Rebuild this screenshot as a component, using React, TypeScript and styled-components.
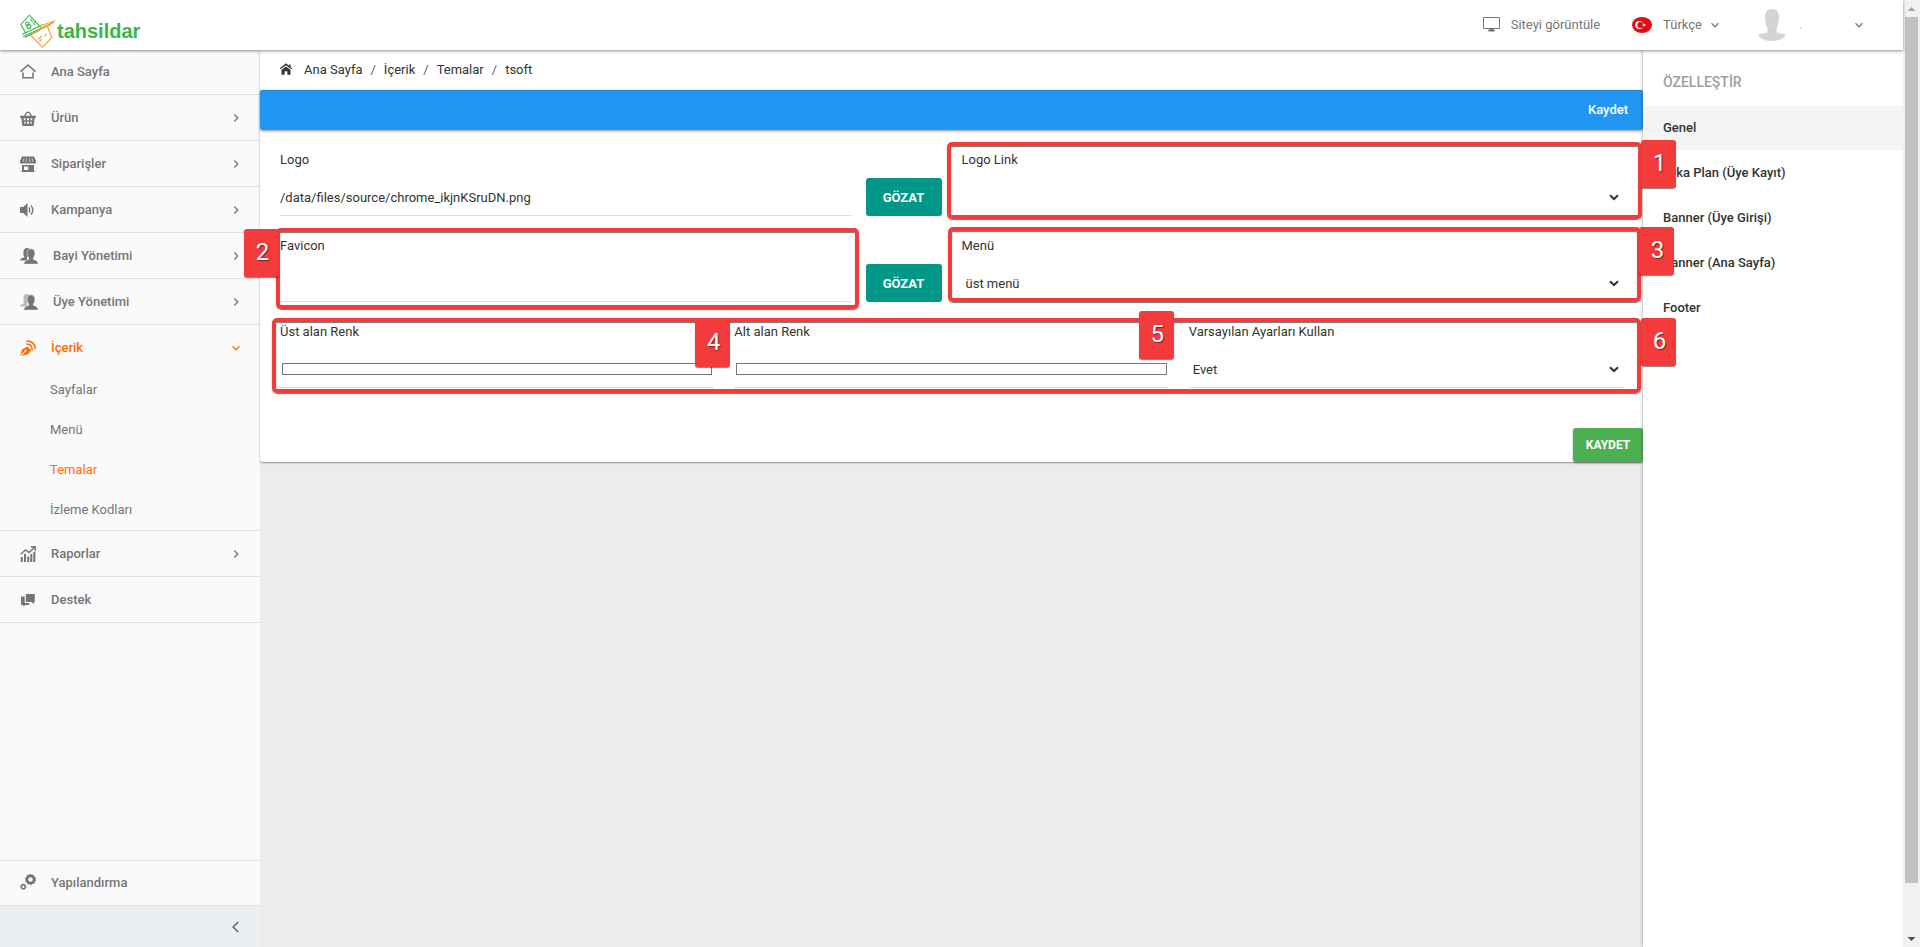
import React from "react";
import styled, { createGlobalStyle, css } from "styled-components";

const GlobalStyle = createGlobalStyle`
  *, *::before, *::after { box-sizing: border-box; }
  body { margin: 0; font-family: Roboto, "Liberation Sans", sans-serif; font-size: 13px; color: #333; background: #ececec; }
  button, input, select { font: inherit; color: inherit; }
  a { color: inherit; text-decoration: none; }
  ul, ol { list-style: none; margin: 0; padding: 0; }
`;

/* ---------- page frame ---------- */
const Page = styled.div`
  display: flex;
  min-height: 100vh;
`;

const Shell = styled.div`
  flex: 1;
  min-width: 0;
  display: flex;
  flex-direction: column;
`;

const Header = styled.header`
  position: relative;
  z-index: 3;
  height: 50px;
  padding: 0 39px 0 20px;
  display: flex;
  align-items: center;
  justify-content: space-between;
  background: #fff;
  color: #757575;
  box-shadow: 0 1px 3px rgba(0, 0, 0, 0.45);
`;

const Brand = styled.a`
  display: flex;
  align-items: center;
  gap: 1px;
  padding-top: 12px;
  color: #3bb54a;
  font: bold 20px/24px "Liberation Sans", Arial, sans-serif;
`;

const HeaderTools = styled.div`
  display: flex;
  align-items: center;
  padding-bottom: 1px;
`;

const ViewSite = styled.a`
  display: flex;
  align-items: center;
  gap: 11px;
  margin-right: 32px;
`;

const HeaderButton = styled.button`
  display: flex;
  align-items: center;
  gap: 8px;
  padding: 0;
  border: 0;
  background: none;
  & + & { margin-left: 38px; }
`;

const Language = styled.span`
  padding-left: 3px;
`;

const UserName = styled.span`
  width: 52px;
  padding-left: 5px;
  text-align: left;
  color: #bbb;
`;

const Body = styled.div`
  flex: 1;
  display: flex;
`;

/* ---------- left navigation ---------- */
const Sidebar = styled.nav`
  width: 260px;
  flex: none;
  display: flex;
  flex-direction: column;
  background: #fafafa;
  color: #757575;
  box-shadow: 0 0 3px rgba(0, 0, 0, 0.45);
`;

const NavList = styled.ul`
  flex: 1;
`;

const NavItem = styled.li`
  border-bottom: 1px solid #e3e3e3;
`;

const NavLink = styled.a<{ $active?: boolean; $short?: boolean }>`
  display: flex;
  align-items: center;
  height: ${(p) => (p.$short ? 44 : 45)}px;
  padding: 0 19px ${(p) => (p.$short ? 2 : 0)}px 20px;
  font-weight: 500;
  color: ${(p) => (p.$active ? "#ff6d00" : "inherit")};
`;

const NavLabel = styled.span`
  flex: 1;
  padding-left: 15px;
`;

const SubLink = styled.a<{ $active?: boolean }>`
  display: flex;
  align-items: center;
  height: 40px;
  padding: 0 0 2px 50px;
  color: ${(p) => (p.$active ? "#ff6d00" : "inherit")};
`;

const SidebarConfig = styled.div`
  border-top: 1px solid #e3e3e3;
  border-bottom: 1px solid #e3e3e3;
`;

const CollapseButton = styled.button`
  display: flex;
  align-items: center;
  justify-content: flex-end;
  height: 41px;
  padding: 0 18px;
  border: 0;
  background: #ebeff2;
  color: #616161;
`;

/* ---------- content ---------- */
const Main = styled.main`
  flex: 1;
  min-width: 0;
  background: #ececec;
`;

const Card = styled.section`
  background: #fff;
  border-radius: 0 0 3px 3px;
  box-shadow: 0 1px 2px rgba(0, 0, 0, 0.4);
`;

const Breadcrumb = styled.ol`
  display: flex;
  align-items: center;
  height: 40px;
  padding: 0 20px 2px;
`;

const Crumb = styled.li`
  display: flex;
  align-items: center;
  & + &::before { content: "/"; padding: 0 8px; color: #616161; }
`;

const HomeCrumb = styled.a`
  display: flex;
  align-items: center;
  gap: 12px;
`;

const ActionBar = styled.div`
  display: flex;
  align-items: center;
  justify-content: flex-end;
  height: 40px;
  padding: 0 15px 2px;
  border-radius: 3px;
  background: #2196f3;
  box-shadow: inset 0 1px 0 #1c86da, 0 1px 3px rgba(0, 0, 0, 0.45);
`;

const BarButton = styled.button`
  padding: 0;
  border: 0;
  background: none;
  color: #fff;
  font-weight: 500;
`;

const Form = styled.form`
  padding-top: 14px;
`;

const Rows = styled.div`
  display: flex;
  flex-direction: column;
  gap: 14px;
  padding: 0 20px;
`;

const Row = styled.div<{ $columns: number }>`
  position: relative;
  display: grid;
  grid-template-columns: repeat(${(p) => p.$columns}, minmax(0, 1fr));
  gap: 20px;
`;

const FieldGroup = styled.div`
  display: flex;
  align-items: flex-end;
  gap: 15px;
`;

const Field = styled.div`
  position: relative;
  flex: 1;
  min-width: 0;
  display: flex;
  flex-direction: column;
  gap: 2px;
`;

const Label = styled.label`
  line-height: 32px;
`;

const control = css`
  width: 100%;
  height: 38px;
  border: 0;
  border-bottom: 1px solid #dcdcdc;
  border-radius: 0;
  background: transparent;
  outline: none;
`;

const TextInput = styled.input`
  ${control}
  padding: 2px 0 0;
`;

const ColorInput = styled.input`
  ${control}
  appearance: none;
  padding: 13px 2px 12px;
  &::-webkit-color-swatch-wrapper { padding: 0; }
  &::-webkit-color-swatch { border: 1px solid #767676; border-radius: 0; }
`;

const SelectBox = styled.div`
  position: relative;
`;

const Select = styled.select`
  ${control}
  display: block;
  appearance: none;
  padding: 2px 30px 0 4px;
`;

const SelectArrow = styled.svg`
  position: absolute;
  right: 4px;
  top: 16px;
  pointer-events: none;
`;

const BrowseButton = styled.button`
  width: 76px;
  height: 38px;
  padding: 0;
  border: 0;
  border-radius: 3px;
  background: #009688;
  color: #fff;
  font-weight: 700;
`;

const FormFooter = styled.div`
  display: flex;
  justify-content: flex-end;
  padding-top: 40px;
`;

const SaveButton = styled.button`
  width: 70px;
  height: 34px;
  padding: 0;
  border: 0;
  border-radius: 3px;
  background: #4caf50;
  color: #fff;
  font-size: 12px;
  font-weight: 700;
  box-shadow: 0 1px 2px rgba(0, 0, 0, 0.35);
`;

/* ---------- numbered callouts lying over the form ---------- */
const Highlight = styled.div<{ $inset: string }>`
  position: absolute;
  z-index: 1;
  inset: ${(p) => p.$inset};
  border: 4px solid #f43b3b;
  border-radius: 5px;
  box-shadow: 0 1px 1px rgba(0, 0, 0, 0.55), inset 0 1px 1px rgba(0, 0, 0, 0.55);
  pointer-events: none;
`;

const Marker = styled.span<{ $top: number; $left?: number; $right?: number }>`
  position: absolute;
  z-index: 2;
  top: ${(p) => p.$top}px;
  left: ${(p) => (p.$left === undefined ? "auto" : `${p.$left}px`)};
  right: ${(p) => (p.$right === undefined ? "auto" : `${p.$right}px`)};
  width: 35px;
  height: 48px;
  padding-left: 2px;
  border-radius: 3px;
  background: #f43b3b;
  color: #fff;
  font-size: 24px;
  line-height: 47px;
  text-align: center;
  text-shadow: 1px 1px 1px rgba(0, 0, 0, 0.5);
  box-shadow: 0 1px 1px rgba(0, 0, 0, 0.5);
`;

/* ---------- right panel ---------- */
const Panel = styled.aside`
  width: 260px;
  flex: none;
  background: #fff;
  box-shadow: 0 0 3px rgba(0, 0, 0, 0.45);
`;

const PanelTitle = styled.h2`
  margin: 0;
  padding: 8px 20px 0;
  font-size: 14px;
  font-weight: 500;
  line-height: 48px;
  color: #9e9e9e;
`;

const PanelLink = styled.a<{ $active?: boolean }>`
  display: block;
  margin-bottom: 1px;
  padding: 0 20px;
  font-weight: 500;
  line-height: 44px;
  background: ${(p) => (p.$active ? "#f4f4f4" : "transparent")};
`;

/* ---------- scroll track ---------- */
const Track = styled.div`
  width: 17px;
  flex: none;
  display: flex;
  flex-direction: column;
  align-items: center;
  justify-content: space-between;
  background: #f1f1f1;
`;

const Thumb = styled.div`
  width: 13px;
  flex: 1;
  margin-bottom: 47px;
  background: #c1c1c1;
`;

const TrackArrow = styled.svg`
  display: block;
  flex: none;
`;

/* ---------- drawings ---------- */
const Chevron = ({ d, size = 10, width = 1.3 }: { d: string; size?: number; width?: number }) => (
  <svg width={size} height={size} viewBox="0 0 10 10" fill="none" stroke="currentColor" strokeWidth={width} aria-hidden="true">
    <path d={d} />
  </svg>
);
const RIGHT = "M3.3 1.5 6.8 5 3.3 8.5";
const DOWN = "M1.5 3.3 5 6.8 8.5 3.3";

const Icon = ({ children, width = 16 }: { children: React.ReactNode; width?: number }) => (
  <svg width={width} height="16" viewBox={`0 0 ${width} 16`} fill="currentColor" aria-hidden="true">
    {children}
  </svg>
);

const LogoMark = () => (
  <svg width="36" height="34" viewBox="0 0 36 34" fill="none" aria-hidden="true">
    <g stroke="#3bb54a" strokeWidth="1.1">
      <path d="M6 19.500 .8 10.500 9.300 1.200 21 13.500" />
      <path d="M3 22.700 33 8.700M2 20.500 23 10.500M5 23.500 20 16" />
      <circle cx="7.300" cy="9.700" r="1.700" />
      <circle cx="8.900" cy="12.600" r="2" />
      <path d="M10.500 5.300l2.400 2.700M13.500 9l1.500 2M14.200 7.500l1.200 1.500" />
    </g>
    <g stroke="#f8a13f" strokeWidth="1.200">
      <path d="M11 21.500 22.500 33.300 31.800 23.500 27.500 12.500" />
      <path d="M19 12.500 35 6.800M20 15 34 8.200M12 19.500 31 10.700" />
      <path d="M18 25.500l4-3.500M19.500 28l2-3M24.500 22.500l2-3" />
    </g>
  </svg>
);

const Home = () => (
  <Icon>
    <path d="M.5 8.600 8 2l7.500 6.600" fill="none" stroke="currentColor" strokeWidth="1.600" />
    <path d="M3 9.500v5.200h10V9.500" fill="none" stroke="currentColor" strokeWidth="1.600" />
  </Icon>
);
const Basket = () => (
  <Icon>
    <path d="M4.200 6.500 6.800 2.300h2.400l2.600 4.200" fill="none" stroke="currentColor" strokeWidth="1.300" />
    <path fillRule="evenodd" d="M0 5.800h16v2h-1.200L13.600 16H2.400L1.200 7.800H0zM3.600 8.200h1.900v2H3.900zM7 8.200h2v2H7zM10.500 8.200h1.900l-.3 2h-1.600zM4.100 11.700h1.500v2.100H4.400zM7 11.700h2v2.100H7zM10.400 11.700h1.500l-.3 2.100h-1.200z" />
  </Icon>
);
const Store = () => (
  <Icon>
    <path d="M2 .6h12L16 5v1.500a1.400 1.400 0 0 1-2.700.3 1.400 1.400 0 0 1-2.600 0 1.400 1.400 0 0 1-2.700 0 1.400 1.400 0 0 1-2.700 0 1.400 1.400 0 0 1-2.600 0A1.400 1.400 0 0 1 0 6.500V5z" />
    <path stroke="#fafafa" strokeWidth=".6" d="M4 2.500 3 6M6.600 2.500 6 6M9.400 2.500l.600 3.500M12 2.500 13 6" />
    <path fillRule="evenodd" d="M2 9h12v6h.8v1H1.200v-1H2zM4 10.600v3.400h4.200v-3.400z" />
  </Icon>
);
const Speaker = () => (
  <Icon>
    <path d="M0 5h3.200L7.500 1v14L3.200 11H0z" />
    <path d="M8.900 5.300q1.800 2.700 0 5.400M10.900 3.300q3.800 4.700 0 9.400" fill="none" stroke="currentColor" strokeWidth="1.300" />
  </Icon>
);
const Users = ({ faded }: { faded?: boolean }) => (
  <Icon width={18}>
    <path opacity={faded ? 0.5 : 1} d="M7 0c2.400 0 3.600 1.400 3.600 3.800L7 9.500V12.500H0c.2-1.800 2-2.500 4.500-3.300C3.300 7.700 3.200 5.500 3.600 3 4 1 5 0 7 0z" />
    <path stroke="#fafafa" strokeWidth=".5" d="M11 .8c2.700 0 3.900 1.700 3.900 4.600 0 2-.7 3.500-1.600 4.600v1.200c2 .8 4.600 1.200 4.900 5H3.800c.3-3.800 3-4.200 5-5V10c-.9-1.100-1.700-2.600-1.700-4.600C7.100 2.500 8.300.8 11 .8z" />
  </Icon>
);
const Pen = () => (
  <Icon>
    <path fillRule="evenodd" d="M.2 16 2 9.500l5.500-3 3.800 3.800-3.200 4L1.400 16l4-4.300a1 1 0 1 0-.8-.8z" />
    <path d="M6.200 4q5.800 0 6.200 6.500M6.200 .9Q15 1 15.300 9" fill="none" stroke="currentColor" strokeWidth="1.500" />
  </Icon>
);
const Report = () => (
  <Icon>
    <path d="M.6 8.300 5.500 4l3.600 2.600L14.300 1.600M11 .8h4.200V5" fill="none" stroke="currentColor" strokeWidth="1.400" />
    <path d="M.8 11h2v5h-2zM4 8h2v8H4zM7.200 10.500h2V16h-2zM10.300 8h2v8h-2zM13.300 5.800h2V16h-2z" />
  </Icon>
);
const Chat = () => (
  <Icon>
    <path d="M5.800 2h9v8h-1v2.300L11.400 10H5.800z" />
    <path d="M1 4.500h3.700V11h4.500v2H5.200l-1.800 2v-2H1z" />
  </Icon>
);
const Gears = () => (
  <Icon>
    <g fill="none" stroke="currentColor">
      <circle cx="10.500" cy="5.500" r="3.600" strokeWidth="2.600" />
      <circle cx="10.500" cy="5.500" r="4.900" strokeWidth="1.200" strokeDasharray="1.5 1.580" />
      <circle cx="3.300" cy="12.700" r="1.900" strokeWidth="1.400" />
      <circle cx="3.300" cy="12.700" r="2.800" strokeWidth=".9" strokeDasharray="1.100 1.100" />
    </g>
  </Icon>
);

/* ---------- data ---------- */
type NavEntry = { label: string; icon: React.ReactNode; more?: boolean; active?: boolean; children?: string[] };

const NAV: NavEntry[] = [
  { label: "Ana Sayfa", icon: <Home /> },
  { label: "Ürün", icon: <Basket />, more: true },
  { label: "Siparişler", icon: <Store />, more: true },
  { label: "Kampanya", icon: <Speaker />, more: true },
  { label: "Bayi Yönetimi", icon: <Users />, more: true },
  { label: "Üye Yönetimi", icon: <Users faded />, more: true },
  { label: "İçerik", icon: <Pen />, more: true, active: true, children: ["Sayfalar", "Menü", "Temalar", "İzleme Kodları"] },
  { label: "Raporlar", icon: <Report />, more: true },
  { label: "Destek", icon: <Chat /> },
];

const SECTIONS = ["Genel", "Arka Plan (Üye Kayıt)", "Banner (Üye Girişi)", "Banner (Ana Sayfa)", "Footer"];

const SelectField = ({ id, label, value, children }: { id: string; label: string; value: string; children?: React.ReactNode }) => (
  <Field>
    <Label htmlFor={id}>{label}</Label>
    <SelectBox>
      <Select id={id} defaultValue={value}>
        <option value={value}>{value}</option>
      </Select>
      <SelectArrow width="10" height="7" viewBox="0 0 10 7" fill="none" stroke="#333" strokeWidth="2" aria-hidden="true">
        <path d="M1 1.200 5 5 9 1.200" />
      </SelectArrow>
    </SelectBox>
    {children}
  </Field>
);

export default function App() {
  return (
    <Page>
      <GlobalStyle />
      <Shell>
        <Header>
          <Brand href="#">
            <LogoMark />
            tahsildar
          </Brand>
          <HeaderTools>
            <ViewSite href="#">
              <svg width="17" height="15" viewBox="0 0 17 15" fill="none" stroke="currentColor" aria-hidden="true">
                <path d="M.5 .5h16v11H.5z" />
                <path d="M5.500 14l1-1.500h4l1 1.500z" fill="currentColor" />
              </svg>
              Siteyi görüntüle
            </ViewSite>
            <HeaderButton type="button">
              <svg width="20" height="16" viewBox="0 0 20 16" aria-hidden="true">
                <ellipse cx="10" cy="8" rx="10" ry="8" fill="#e30a17" />
                <circle cx="7.300" cy="8" r="4" fill="#fff" />
                <circle cx="8.400" cy="8" r="3.100" fill="#e30a17" />
                <path d="m10 8 1.400-.5.1-1.400.9 1.100 1.400-.4-.8 1.200.8 1.200-1.400-.4-.9 1.100-.1-1.400z" fill="#fff" />
              </svg>
              <Language>Türkçe</Language>
              <Chevron d={DOWN} />
            </HeaderButton>
            <HeaderButton type="button" aria-label="Hesap">
              <svg width="28" height="32" viewBox="0 0 28 32" fill="#d4d4d4" aria-hidden="true">
                <path d="M14 0c4.500 0 7 3 7 8 0 5-1.200 9-2.500 11v4.500c3 1 7.500 1 9.500 2.500-3 4-8 6-14 6S3 30 0 26c2-1.500 6.500-1.500 9.500-2.500V19C8 17 7 13 7 8c0-5 2.500-8 7-8z" />
                <path d="M9.500 19.500q4.500 4.500 9 0v1.500q-4 2.500-9-1.500z" fill="#c2c2c2" />
              </svg>
              <UserName>.</UserName>
              <Chevron d={DOWN} />
            </HeaderButton>
          </HeaderTools>
        </Header>
        <Body>
          <Sidebar>
            <NavList>
              {NAV.map((item, i) => (
                <NavItem key={item.label}>
                  <NavLink href="#" $active={item.active} $short={i === 0}>
                    {item.icon}
                    <NavLabel>{item.label}</NavLabel>
                    {item.more && <Chevron d={item.active ? DOWN : RIGHT} />}
                  </NavLink>
                  {item.children?.map((child) => (
                    <SubLink key={child} href="#" $active={child === "Temalar"}>
                      {child}
                    </SubLink>
                  ))}
                </NavItem>
              ))}
            </NavList>
            <SidebarConfig>
              <NavLink href="#" $short>
                <Gears />
                <NavLabel>Yapılandırma</NavLabel>
              </NavLink>
            </SidebarConfig>
            <CollapseButton type="button" aria-label="Menüyü daralt">
              <Chevron d="M6.800 .8 2.600 5l4.200 4.200" size={12} width={1.2} />
            </CollapseButton>
          </Sidebar>
          <Main>
            <Card>
              <Breadcrumb>
                <Crumb>
                  <HomeCrumb href="#">
                    <svg width="12" height="12" viewBox="0 0 12 12" fill="#333" aria-hidden="true">
                      <path d="M6 .3 9 2.700V1.500h1.500v2.400L12 5.300l-.8.900L6 2.200.800 6.200 0 5.300z" />
                      <path d="M6 3.500 10.500 7v4.700H7.400V8.200H4.600v3.500H1.500V7z" />
                    </svg>
                    Ana Sayfa
                  </HomeCrumb>
                </Crumb>
                <Crumb><a href="#">İçerik</a></Crumb>
                <Crumb><a href="#">Temalar</a></Crumb>
                <Crumb>tsoft</Crumb>
              </Breadcrumb>
              <ActionBar>
                <BarButton type="button">Kaydet</BarButton>
              </ActionBar>
              <Form onSubmit={(e) => e.preventDefault()}>
                <Rows>
                  <Row $columns={2}>
                    <FieldGroup>
                      <Field>
                        <Label htmlFor="logo">Logo</Label>
                        <TextInput id="logo" type="text" defaultValue="/data/files/source/chrome_ikjnKSruDN.png" />
                      </Field>
                      <BrowseButton type="button">GÖZAT</BrowseButton>
                    </FieldGroup>
                    <SelectField id="logo-link" label="Logo Link" value="">
                      <Highlight $inset="-2px -19px -3px -15px" />
                      <Marker $top={-4} $right={-53}>1</Marker>
                    </SelectField>
                  </Row>
                  <Row $columns={2}>
                    <FieldGroup>
                      <Field>
                        <Label htmlFor="favicon">Favicon</Label>
                        <TextInput id="favicon" type="text" />
                        <Highlight $inset="-2px -8px -7px -4px" />
                        <Marker $top={-1} $left={-36}>2</Marker>
                      </Field>
                      <BrowseButton type="button">GÖZAT</BrowseButton>
                    </FieldGroup>
                    <SelectField id="menu" label="Menü" value="üst menü">
                      <Highlight $inset="-3px -18px 0 -14px" />
                      <Marker $top={-3} $right={-51}>3</Marker>
                    </SelectField>
                  </Row>
                  <Row $columns={3}>
                    <Field>
                      <Label htmlFor="top-color">Üst alan Renk</Label>
                      <ColorInput id="top-color" type="color" defaultValue="#ffffff" />
                      <Marker $top={3} $right={-16}>4</Marker>
                    </Field>
                    <Field>
                      <Label htmlFor="bottom-color">Alt alan Renk</Label>
                      <ColorInput id="bottom-color" type="color" defaultValue="#ffffff" />
                      <Marker $top={-5} $right={-5}>5</Marker>
                    </Field>
                    <SelectField id="defaults" label="Varsayılan Ayarları Kullan" value="Evet">
                      <Marker $top={2} $right={-53}>6</Marker>
                    </SelectField>
                    <Highlight $inset="2px -18px -5px -8px" />
                  </Row>
                </Rows>
                <FormFooter>
                  <SaveButton type="submit">KAYDET</SaveButton>
                </FormFooter>
              </Form>
            </Card>
          </Main>
          <Panel>
            <PanelTitle>ÖZELLEŞTİR</PanelTitle>
            {SECTIONS.map((name, i) => (
              <PanelLink key={name} href="#" $active={i === 0}>
                {name}
              </PanelLink>
            ))}
          </Panel>
        </Body>
      </Shell>
      <Track aria-hidden="true">
        <TrackArrow width="17" height="17" viewBox="0 0 17 17" fill="#a3a3a3"><path d="M4.500 11 8.500 7l4 4z" /></TrackArrow>
        <Thumb />
        <TrackArrow width="17" height="17" viewBox="0 0 17 17" fill="#505050"><path d="m4.500 7 4 4 4-4z" /></TrackArrow>
      </Track>
    </Page>
  );
}
